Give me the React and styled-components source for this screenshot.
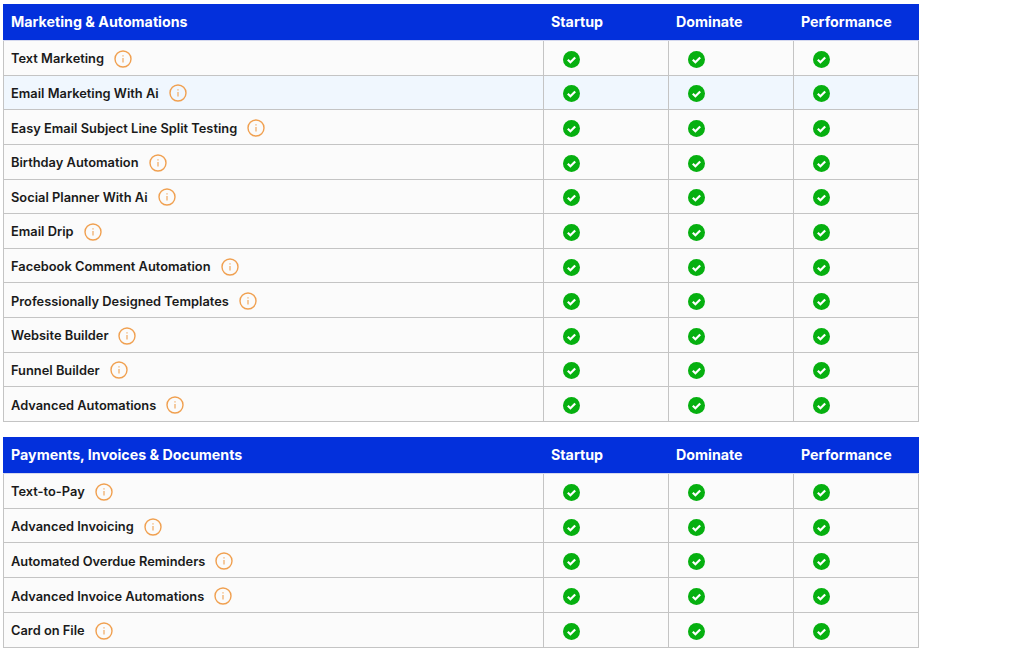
import styled, { createGlobalStyle } from "styled-components";

const GlobalStyle = createGlobalStyle`
  html, body {
    margin: 0;
    padding: 0;
    background: #ffffff;
    font-family: Inter, "Liberation Sans", sans-serif;
  }
`;

const Page = styled.div`
  display: flex;
  flex-direction: column;
  gap: 15px;
  width: 916px;
  padding: 4px 0 0 3px;
`;
const Table = styled.section`
  display: flex;
  flex-direction: column;
`;
const HeaderRow = styled.div`
  display: grid;
  grid-template-columns: 540px 125px 125px 126px;
  align-items: center;
  height: 36px;
  padding-bottom: 1px;
  box-sizing: border-box;
  background: #0330dc;
  color: #ffffff;
  font-size: 14.25px;
  font-weight: 700;
`;
const HeaderCell = styled.div`
  padding-left: 8px;
`;
const Rows = styled.div`
  border-top: 1px solid #d4d8ee;
`;
const Row = styled.div`
  display: grid;
  grid-template-columns: 540px 125px 125px 126px;
  height: ${(props) => props.height}px;
  background: ${(props) => (props.highlight ? "#f0f7fe" : "#fbfbfb")};
  border-bottom: 1px solid #c4c4c4;
  box-sizing: border-box;
`;
const FeatureCell = styled.div`
  display: flex;
  align-items: center;
  gap: 10px;
  padding: 2px 0 0 7px;
  border-left: 1px solid #c4c4c4;
  color: #1a1a1a;
  font-size: 12.85px;
  font-weight: 600;
`;
const CheckCell = styled.div`
  display: flex;
  align-items: center;
  padding: 3px 0 0 19px;
  border-left: 1px solid #c4c4c4;
  &:last-child {
    border-right: 1px solid #c4c4c4;
  }
`;

const InfoIcon = () => (
  <svg width="18" height="18" viewBox="0 0 18 18" fill="none">
    <circle cx="9" cy="9" r="8" stroke="#f0a050" strokeWidth="1.4" />
    <path d="M9 8v4.6" stroke="#f0a860" strokeWidth="1.2" />
    <path d="M9 5.2v1.2" stroke="#f0a860" strokeWidth="1.2" />
  </svg>
);

const CheckIcon = () => (
  <svg width="17" height="17" viewBox="0 0 17 17">
    <circle cx="8.5" cy="8.5" r="8.5" fill="#06b010" />
    <path
      d="M4.8 8.8l2.6 2.5 4.8-4.8"
      fill="none"
      stroke="#ffffff"
      strokeWidth="2.2"
    />
  </svg>
);

const plans = ["Startup", "Dominate", "Performance"];

const sections = [
  {
    title: "Marketing & Automations",
    rowHeight: 34.64,
    rows: [
      "Text Marketing",
      "Email Marketing With Ai",
      "Easy Email Subject Line Split Testing",
      "Birthday Automation",
      "Social Planner With Ai",
      "Email Drip",
      "Facebook Comment Automation",
      "Professionally Designed Templates",
      "Website Builder",
      "Funnel Builder",
      "Advanced Automations",
    ],
  },
  {
    title: "Payments, Invoices & Documents",
    rowHeight: 34.8,
    rows: [
      "Text-to-Pay",
      "Advanced Invoicing",
      "Automated Overdue Reminders",
      "Advanced Invoice Automations",
      "Card on File",
    ],
  },
];

const App = () => {
  return (
    <Page>
      <GlobalStyle />
      {sections.map((section) => (
        <Table key={section.title}>
          <HeaderRow>
            <HeaderCell>{section.title}</HeaderCell>
            {plans.map((plan) => (
              <HeaderCell key={plan}>{plan}</HeaderCell>
            ))}
          </HeaderRow>
          <Rows>
            {section.rows.map((name) => (
              <Row
                key={name}
                height={section.rowHeight}
                highlight={name === "Email Marketing With Ai"}
              >
                <FeatureCell>
                  {name}
                  <InfoIcon />
                </FeatureCell>
                {plans.map((plan) => (
                  <CheckCell key={plan}>
                    <CheckIcon />
                  </CheckCell>
                ))}
              </Row>
            ))}
          </Rows>
        </Table>
      ))}
    </Page>
  );
};

export default App;
